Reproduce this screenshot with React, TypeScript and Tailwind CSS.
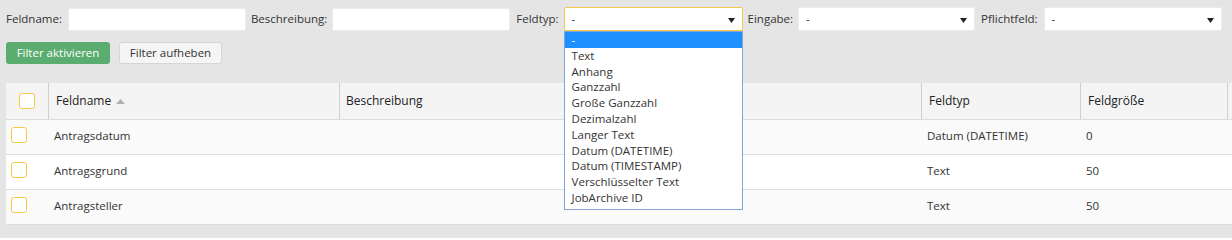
import React from "react";

const font = { fontFamily: '"Open Sans", "Liberation Sans", sans-serif' };

function Caret() {
  return (
    <svg width="7" height="5" viewBox="0 0 7 5" className="absolute right-[7px] top-[10px]">
      <path d="M0 0 L7 0 L3.5 5 Z" fill="#222" />
    </svg>
  );
}

function Select({ focused, width, children }: { focused?: boolean; width: string; children?: React.ReactNode }) {
  return (
    <div
      className={`relative h-[24px] ${width} rounded-[2px] bg-white border ${
        focused ? "border-[#f4c84a]" : "border-[#ececec]"
      } flex items-center pl-[7px] text-[11.5px] text-[#333]`}
    >
      -
      <Caret />
      {children}
    </div>
  );
}

const options = [
  "-",
  "Text",
  "Anhang",
  "Ganzzahl",
  "Große Ganzzahl",
  "Dezimalzahl",
  "Langer Text",
  "Datum (DATETIME)",
  "Datum (TIMESTAMP)",
  "Verschlüsselter Text",
  "JobArchive ID",
];

function Checkbox() {
  return <div className="w-[16px] h-[16px] rounded-[3px] border border-[#f6c94c] bg-white shrink-0" />;
}

const rows = [
  { name: "Antragsdatum", typ: "Datum (DATETIME)", size: "0", bg: "bg-[#fafafa]" },
  { name: "Antragsgrund", typ: "Text", size: "50", bg: "bg-white" },
  { name: "Antragsteller", typ: "Text", size: "50", bg: "bg-[#fafafa]" },
];

export default function App() {
  return (
    <div className="w-[1232px] h-[238px] bg-[#e5e5e5] overflow-hidden pt-[7px] pl-[6px]" style={font}>
      {/* filter row */}
      <div className="flex items-center h-[24px] text-[11.5px] text-[#333]">
        <span>Feldname:</span>
        <div className="ml-[6px] w-[178px] h-[23px] bg-white rounded-[2px] border border-[#ececec]" />
        <span className="ml-[5px]">Beschreibung:</span>
        <div className="ml-[5px] w-[178px] h-[23px] bg-white rounded-[2px] border border-[#ececec]" />
        <span className="ml-[6px]">Feldtyp:</span>
        <div className="ml-[5px]">
          <Select focused width="w-[179px]">
            <div className="absolute left-[-1px] top-[23px] w-[179px] bg-white border border-[#86a3d6] pb-[3px] z-10">
              {options.map((o, i) => (
                <div
                  key={o}
                  className={`h-[15.8px] leading-[16px] pl-[7px] text-[11.5px] ${
                    i === 0 ? "bg-[#1e90ff] text-white" : "text-[#333]"
                  }`}
                >
                  {o}
                </div>
              ))}
            </div>
          </Select>
        </div>
        <span className="ml-[5px]">Eingabe:</span>
        <div className="ml-[5px]">
          <Select width="w-[177px]" />
        </div>
        <span className="ml-[6px]">Pflichtfeld:</span>
        <div className="ml-[6px]">
          <Select width="w-[178px]" />
        </div>
      </div>

      {/* buttons */}
      <div className="flex items-center mt-[11px] gap-[9px] text-[11.5px]">
        <button className="h-[22px] w-[104px] rounded-[3px] bg-[#5aad6e] text-white">Filter aktivieren</button>
        <button className="h-[22px] w-[103px] rounded-[3px] bg-[#f5f5f5] border border-[#d6d6d6] text-[#333]">
          Filter aufheben
        </button>
      </div>

      {/* table */}
      <div className="mt-[19px] w-[1240px] text-[11.5px]">
        <div className="flex h-[37px] bg-[#f4f4f4] border-b border-[#dcdcdc] text-[#222] text-[12px]">
          <div className="w-[43px] shrink-0 flex items-center justify-center border-r border-[#cfcfcf]">
            <Checkbox />
          </div>
          <div className="w-[291px] shrink-0 flex items-center pl-[7px] border-r border-[#cfcfcf]">
            Feldname
            <svg width="9" height="5" viewBox="0 0 9 5" className="ml-[5px] mt-[1px]">
              <path d="M0 5 L9 5 L4.5 0 Z" fill="#b0b0b0" />
            </svg>
          </div>
          <div className="w-[582px] shrink-0 flex items-center pl-[6px] border-r border-[#cfcfcf]">Beschreibung</div>
          <div className="w-[159px] shrink-0 flex items-center pl-[7px] border-r border-[#cfcfcf]">Feldtyp</div>
          <div className="w-[147px] shrink-0 flex items-center pl-[7px] border-r border-[#cfcfcf]">Feldgröße</div>
          <div className="flex-1" />
        </div>
        {rows.map((r) => (
          <div key={r.name} className={`flex h-[35px] ${r.bg} border-b border-[#dcdcdc] text-[#333]`}>
            <div className="w-[43px] shrink-0 flex items-start pt-[7px] pl-[5px]">
              <Checkbox />
            </div>
            <div className="w-[291px] shrink-0 pl-[5px] pt-[7px] leading-[17px]">{r.name}</div>
            <div className="w-[582px] shrink-0" />
            <div className="w-[159px] shrink-0 pl-[5px] pt-[7px] leading-[17px]">{r.typ}</div>
            <div className="w-[147px] shrink-0 pl-[5px] pt-[7px] leading-[17px]">{r.size}</div>
            <div className="flex-1" />
          </div>
        ))}
      </div>
    </div>
  );
}
